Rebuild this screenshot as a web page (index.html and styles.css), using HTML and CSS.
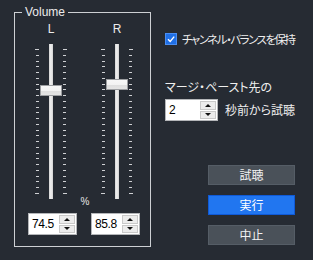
FILE: index.html
```html
<!DOCTYPE html>
<html lang="ja">
<head>
<meta charset="utf-8">
<link rel="stylesheet" href="styles.css">
</head>
<body>
<div class="dialog">
  <fieldset class="group">
    <legend class="legend">Volume</legend>
    <div class="channels">
      <div class="channel">
        <div class="ch-label">L</div>
        <div class="slider">
          <div class="ticks ticks-left"><i></i><i></i><i></i><i></i><i></i><i></i><i></i><i></i><i></i><i></i><i></i><i></i><i></i><i></i><i></i><i></i><i></i><i></i><i></i><i></i><i></i><i></i><i></i><i></i><i></i><i></i></div>
          <div class="track"></div>
          <div class="ticks ticks-right"><i></i><i></i><i></i><i></i><i></i><i></i><i></i><i></i><i></i><i></i><i></i><i></i><i></i><i></i><i></i><i></i><i></i><i></i><i></i><i></i><i></i><i></i><i></i><i></i><i></i><i></i></div>
          <div class="thumb" style="top:41px"></div>
        </div>
      </div>
      <div class="channel">
        <div class="ch-label">R</div>
        <div class="slider">
          <div class="ticks ticks-left"><i></i><i></i><i></i><i></i><i></i><i></i><i></i><i></i><i></i><i></i><i></i><i></i><i></i><i></i><i></i><i></i><i></i><i></i><i></i><i></i><i></i><i></i><i></i><i></i><i></i><i></i></div>
          <div class="track"></div>
          <div class="ticks ticks-right"><i></i><i></i><i></i><i></i><i></i><i></i><i></i><i></i><i></i><i></i><i></i><i></i><i></i><i></i><i></i><i></i><i></i><i></i><i></i><i></i><i></i><i></i><i></i><i></i><i></i><i></i></div>
          <div class="thumb" style="top:35px"></div>
        </div>
      </div>
    </div>
    <div class="pct">%</div>
    <div class="spins">
      <div class="spin">
        <div class="spin-field">74.5</div>
        <div class="spin-btns"><span class="spin-btn up"></span><span class="spin-btn down"></span></div>
      </div>
      <div class="spin">
        <div class="spin-field">85.8</div>
        <div class="spin-btns"><span class="spin-btn up"></span><span class="spin-btn down"></span></div>
      </div>
    </div>
  </fieldset>

  <div class="side">
    <label class="check">
      <span class="check-box"><svg width="10" height="10" viewBox="0 0 10 10"><path d="M2 5.2 L4.2 7.4 L8.2 2.6" fill="none" stroke="#fff" stroke-width="1.4"/></svg></span>
      <span class="check-text">チャンネル・バランスを保持</span>
    </label>
    <div class="merge-label">マージ・ペースト先の</div>
    <div class="merge-row">
      <div class="spin spin-sec">
        <div class="spin-field">2</div>
        <div class="spin-btns"><span class="spin-btn up"></span><span class="spin-btn down"></span></div>
      </div>
      <span class="merge-text">秒前から試聴</span>
    </div>
    <div class="buttons">
      <button class="btn">試聴</button>
      <button class="btn btn-primary">実行</button>
      <button class="btn">中止</button>
    </div>
  </div>
</div>
</body>
</html>
```

FILE: styles.css
```css
html, body {
  margin: 0;
  padding: 0;
}
body {
  width: 313px;
  height: 260px;
  overflow: hidden;
  background: #262b33;
  color: #e9e9e9;
  font-family: "Noto Sans CJK JP", "Liberation Sans", sans-serif;
  font-size: 12px;
}
.dialog {
  display: flex;
  align-items: flex-start;
  padding-left: 14px;
}

/* group box */
.group {
  margin: 5px 0 0 0;
  padding: 0 0 11px 0;
  width: 137px;
  box-sizing: border-box;
  border: 1px solid #cdd0d4;
  min-inline-size: 0;
}
.legend {
  margin-left: 7px;
  padding: 0 3px;
  font-family: "Liberation Sans", sans-serif;
  font-size: 12px;
  line-height: 14px;
  color: #ececec;
}
.channels {
  display: grid;
  grid-template-columns: 66px 66px;
  padding-left: 3px;
}
.ch-label {
  margin-top: 3px;
  height: 14px;
  line-height: 14px;
  text-align: center;
  font-family: "Liberation Sans", sans-serif;
  font-size: 12px;
  color: #ececec;
}
.slider {
  position: relative;
  margin-top: 8px;
  height: 155px;
  display: flex;
}
.ticks {
  margin-top: 5px;
  height: 145px;
  width: 4px;
  display: flex;
  flex-direction: column;
  justify-content: space-between;
}
.ticks i {
  display: block;
  height: 1px;
  width: 3px;
  background: #cfd1d4;
}
.ticks-left {
  margin-left: 17px;
  align-items: flex-end;
}
.ticks-right {
  margin-left: 10px;
  align-items: flex-start;
}
.ticks i:first-child,
.ticks i:last-child {
  width: 4px;
}
.track {
  margin-left: 10px;
  width: 4px;
  height: 155px;
  background: linear-gradient(90deg, #d2d2d2 0, #ececec 35%, #e6e6e6 70%, #cfcfcf 100%);
}
.thumb {
  position: absolute;
  left: 22px;
  width: 22px;
  height: 11px;
  box-sizing: border-box;
  border: 1px solid #9c9ea1;
  background: linear-gradient(180deg, #f7f7f7 0, #f2f2f2 55%, #dedede 56%, #e4e4e4 100%);
}
.pct {
  margin-top: -3px;
  height: 12px;
  line-height: 12px;
  padding-left: 5px;
  text-align: center;
  font-family: "Liberation Sans", sans-serif;
  font-size: 10px;
  color: #e6e6e6;
}
.spins {
  display: flex;
  gap: 14px;
  padding-left: 13px;
  margin-top: 5px;
}

/* spin boxes */
.spin {
  display: flex;
  flex-shrink: 0;
  width: 49px;
  height: 22px;
  box-sizing: border-box;
  border: 1px solid #b4b6b9;
  background: #fff;
}
.spin-field {
  flex: 1;
  padding-left: 3px;
  line-height: 20px;
  font-family: "Liberation Sans", sans-serif;
  font-size: 12px;
  letter-spacing: -0.4px;
  color: #000;
}
.spin-btns {
  width: 16px;
  display: flex;
  flex-direction: column;
  gap: 1px;
  padding: 1px 1px 1px 0;
}
.spin-btn {
  flex: 1;
  display: flex;
  align-items: center;
  justify-content: center;
  background: #ececec;
  border: 1px solid #c9c9c9;
}
.spin-btn::before {
  content: "";
  width: 0;
  height: 0;
  border-left: 3px solid transparent;
  border-right: 3px solid transparent;
}
.spin-btn.up::before {
  border-bottom: 3px solid #111;
}
.spin-btn.down::before {
  border-top: 3px solid #111;
}

/* right side */
.side {
  flex: 1;
  min-width: 0;
  margin-left: 14px;
  display: flex;
  flex-direction: column;
}
.check {
  margin-top: 32px;
  height: 14px;
  display: flex;
  align-items: center;
  gap: 5px;
  white-space: nowrap;
}
.check-box {
  flex-shrink: 0;
  width: 12px;
  height: 12px;
  box-sizing: border-box;
  border: 1px solid #4a8ef2;
  background: #1f6fe6;
  display: flex;
  align-items: center;
  justify-content: center;
}
.check-text,
.merge-label,
.merge-text {
  font-feature-settings: "palt";
  color: #eeeeee;
  line-height: 16px;
  white-space: nowrap;
}
.check-text {
  font-size: 11.5px;
  letter-spacing: -1.5px;
}
.merge-label {
  margin-top: 33px;
}
.merge-row {
  margin-top: 4px;
  display: flex;
  align-items: center;
  gap: 7px;
}
.spin-sec {
  width: 53px;
}
.buttons {
  margin-top: 44px;
  align-self: flex-end;
  margin-right: 18px;
  display: flex;
  flex-direction: column;
  gap: 10px;
}
.btn {
  width: 87px;
  height: 20px;
  padding: 0;
  border: 1px solid #555d66;
  background: #4a5159;
  color: #f2f2f2;
  font-family: "Noto Sans CJK JP", sans-serif;
  font-size: 12px;
  line-height: 18px;
}
.btn-primary {
  background: #2176f0;
  border-color: #0f5ad8;
  color: #fff;
}
```
